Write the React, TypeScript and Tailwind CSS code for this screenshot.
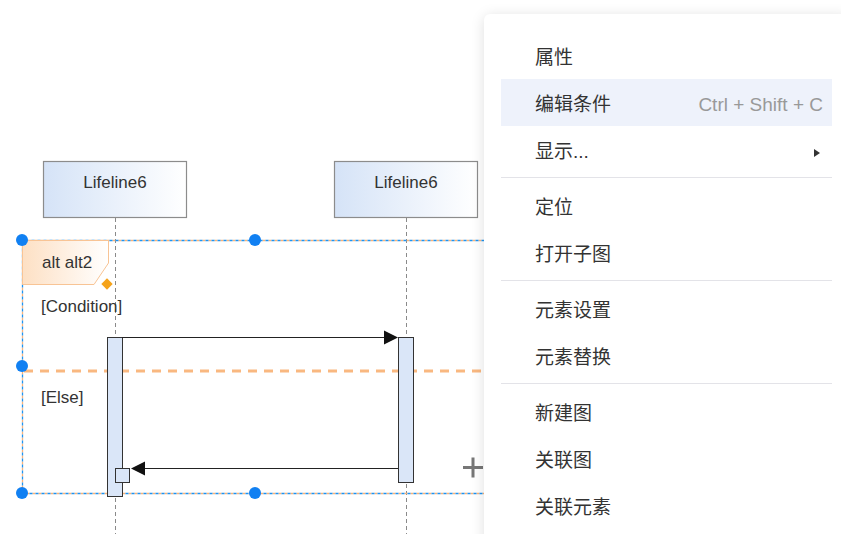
import { Fragment } from 'react';

type MenuItem = { label: string; shortcut?: string; submenu?: boolean; active?: boolean };

const GROUPS: MenuItem[][] = [
  [
    { label: '属性' },
    { label: '编辑条件', shortcut: 'Ctrl + Shift + C', active: true },
    { label: '显示...', submenu: true },
  ],
  [{ label: '定位' }, { label: '打开子图' }],
  [{ label: '元素设置' }, { label: '元素替换' }],
  [{ label: '新建图' }, { label: '关联图' }, { label: '关联元素' }],
];

const FONT = '"Liberation Sans", Arial, sans-serif';

function Lifeline({ x, label }: { x: number; label: string }) {
  return (
    <g>
      <line x1={x + 72.5} y1={218} x2={x + 72.5} y2={534} stroke="#8a8a8a" strokeDasharray="4 3" />
      <rect x={x + 0.5} y={161.5} width={143} height={56} fill="url(#lifeGrad)" stroke="#8c8c8c" strokeWidth={1.2} />
      <text x={x + 72} y={188} textAnchor="middle" fontSize={17} fill="#333" fontFamily={FONT}>
        {label}
      </text>
    </g>
  );
}

function Diagram() {
  return (
    <svg width={841} height={534} className="absolute left-0 top-0">
      <defs>
        <linearGradient id="lifeGrad" x1="0" y1="0" x2="1" y2="0">
          <stop offset="0" stopColor="#d5e3f7" />
          <stop offset="1" stopColor="#ffffff" />
        </linearGradient>
        <linearGradient id="tabGrad" x1="0" y1="0" x2="1" y2="0">
          <stop offset="0" stopColor="#fde0c4" />
          <stop offset="1" stopColor="#ffffff" />
        </linearGradient>
      </defs>

      <Lifeline x={43} label="Lifeline6" />
      <Lifeline x={334} label="Lifeline6" />

      {/* combined fragment frame */}
      <rect x={22.5} y={240.5} width={480} height={253} fill="none" stroke="#f7b27a" strokeWidth={1.3} strokeDasharray="3 3" />
      <rect
        x={22.5}
        y={240.5}
        width={480}
        height={253}
        fill="none"
        stroke="#1e94f2"
        strokeWidth={1.3}
        strokeDasharray="3 3"
        strokeDashoffset={3}
      />

      <polygon points="22.5,240.5 108.5,240.5 108.5,263 94,284.5 22.5,284.5" fill="url(#tabGrad)" stroke="#f8c495" />
      <text x={42} y={268} fontSize={17} fill="#333" fontFamily={FONT}>
        alt alt2
      </text>
      <rect x={103} y={280} width={8} height={8} fill="#f5a31a" transform="rotate(45 107 284)" />

      <text x={41} y={312} fontSize={17} fill="#333" fontFamily={FONT}>
        [Condition]
      </text>
      <line x1={24} y1={371} x2={500} y2={371} stroke="#f9b880" strokeWidth={3} strokeDasharray="9 7" />
      <text x={41} y={403} fontSize={17} fill="#333" fontFamily={FONT}>
        [Else]
      </text>

      {/* activations */}
      <rect x={107.5} y={337.5} width={15} height={159} fill="#dae6f8" stroke="#333" />
      <rect x={398.5} y={337.5} width={15} height={145} fill="#dae6f8" stroke="#333" />

      {/* messages */}
      <line x1={122} y1={337.5} x2={386} y2={337.5} stroke="#222" />
      <polygon points="398,337.5 384,330.5 384,344.5" fill="#111" />
      <line x1={398} y1={468.5} x2={143} y2={468.5} stroke="#222" />
      <polygon points="131,468.5 145,461.5 145,475.5" fill="#111" />
      <rect x={115.5} y={468.5} width={14} height={14} fill="#dae6f8" stroke="#333" />

      {/* selection handles */}
      {[
        [22, 240],
        [255, 240],
        [22, 366],
        [22, 493],
        [255, 493],
      ].map(([cx, cy]) => (
        <circle key={`${cx}-${cy}`} cx={cx} cy={cy} r={6} fill="#1180f2" />
      ))}

      {/* add cursor */}
      <path d="M463 467.5 H483 M473 457.5 V477.5" stroke="#777" strokeWidth={3} />
    </svg>
  );
}

function ContextMenu() {
  return (
    <div
      className="absolute left-[484px] top-[14px] h-[540px] w-[365px] rounded-md bg-white px-[17px] pt-[18px] shadow-[0_2px_14px_rgba(0,0,0,0.13)]"
      style={{ fontFamily: '"Liberation Sans", Arial, "Noto Sans CJK SC", sans-serif' }}
    >
      {GROUPS.map((group, gi) => (
        <Fragment key={gi}>
          {gi > 0 && <div className="my-[4px] h-px bg-[#e3e3e8]" />}
          {group.map((item) => (
            <div
              key={item.label}
              className={`flex h-[47px] items-center justify-between pl-[34px] pr-[9px] pt-[6px] text-[19px] text-[#333] ${
                item.active ? 'bg-[#eef2fb]' : ''
              }`}
            >
              <span>{item.label}</span>
              {item.shortcut && <span className="text-[#999]">{item.shortcut}</span>}
              {item.submenu && (
                <span className="mr-[3px] h-0 w-0 border-y-[4.5px] border-l-[6px] border-y-transparent border-l-[#333]" />
              )}
            </div>
          ))}
        </Fragment>
      ))}
    </div>
  );
}

export default function App() {
  return (
    <div className="relative h-[534px] w-[841px] overflow-hidden bg-white">
      <Diagram />
      <ContextMenu />
    </div>
  );
}
